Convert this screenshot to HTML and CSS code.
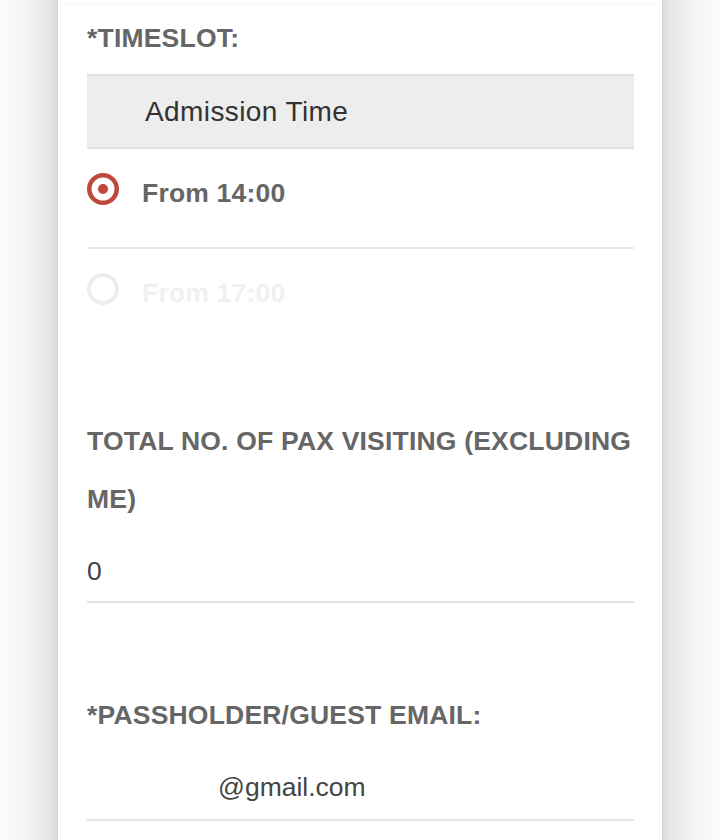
FILE: index.html
```html
<!DOCTYPE html>
<html lang="en">
<head>
<meta charset="utf-8">
<title>Registration form</title>
<link rel="stylesheet" href="styles.css">
</head>
<body>
<div class="page">
  <div class="gutter gutter-left"></div>
  <main class="card">
    <div class="prev-edge"></div>
    <div class="field">
      <div class="label">*TIMESLOT:</div>
      <div class="select-head">Admission Time</div>
      <div class="option">
        <svg class="radio" width="32" height="32" viewBox="0 0 32 32">
          <circle cx="16" cy="16" r="13.75" fill="none" stroke="#c0483a" stroke-width="4.5"/>
          <circle cx="16" cy="16" r="5" fill="#c0483a"/>
        </svg>
        <span class="option-text">From 14:00</span>
      </div>
      <div class="option option-disabled">
        <svg class="radio" width="32" height="32" viewBox="0 0 32 32">
          <circle cx="16" cy="16" r="14" fill="none" stroke="#ededed" stroke-width="4"/>
        </svg>
        <span class="option-text">From 17:00</span>
      </div>
    </div>

    <div class="field field-pax">
      <div class="label">TOTAL NO. OF PAX VISITING (EXCLUDING ME)</div>
      <div class="input">0</div>
    </div>

    <div class="field field-email">
      <div class="label">*PASSHOLDER/GUEST EMAIL:</div>
      <div class="input input-email">@gmail.com</div>
    </div>
  </main>
  <div class="gutter gutter-right"></div>
</div>
</body>
</html>
```

FILE: styles.css
```css
html, body {
  margin: 0;
  padding: 0;
  background: #fafafa;
}

body {
  font-family: "Liberation Sans", Arial, Helvetica, sans-serif;
}

.page {
  display: flex;
  width: 720px;
  height: 840px;
  overflow: hidden;
}

.gutter {
  width: 58px;
  flex: 0 0 58px;
}

.gutter-left {
  background: linear-gradient(to right, #fbfbfb 0%, #f3f3f3 45%, #e6e6e6 85%, #dcdcdc 97%, #d2d2d2 100%);
}

.gutter-right {
  background: linear-gradient(to left, #fbfbfb 0%, #f4f4f4 45%, #e7e7e7 85%, #dddddd 97%, #d2d2d2 100%);
}

.card {
  flex: 0 0 604px;
  background: #ffffff;
  padding: 0 28px 0 29px;
  box-sizing: border-box;
}

.prev-edge {
  height: 3px;
  margin: 0 -28px 5px -29px;
  border-bottom: 1px solid #f6f6f6;
}

.label {
  font-size: 26.5px;
  font-weight: bold;
  line-height: 58px;
  letter-spacing: 0.2px;
  color: #666666;
}

.select-head {
  margin-top: 7px;
  height: 71px;
  line-height: 71px;
  background: #ededed;
  border-top: 2px solid #e3e3e3;
  border-bottom: 2px solid #e3e3e3;
  padding-left: 58px;
  font-size: 28px;
  letter-spacing: 0.4px;
  color: #333333;
}

.option {
  display: flex;
  align-items: flex-start;
  gap: 23px;
  height: 100px;
  box-sizing: border-box;
  padding-top: 24px;
  border-bottom: 2px solid #e6e6e6;
}

.option-disabled {
  border-bottom: none;
}

.radio {
  display: block;
  flex: 0 0 32px;
}

.option-text {
  margin-top: 4px;
  font-size: 26.5px;
  font-weight: bold;
  line-height: 32px;
  letter-spacing: 0.2px;
  color: #666666;
}

.option-disabled .option-text {
  color: #f0f0f0;
}

.field-pax {
  margin-top: 63px;
}

.input {
  margin-top: 21px;
  height: 52px;
  line-height: 44px;
  border-bottom: 2px solid #e3e3e3;
  font-size: 26.5px;
  color: #444444;
}

.field-email {
  margin-top: 83px;
}

.input-email {
  height: 54px;
  padding-left: 131px;
}
```
